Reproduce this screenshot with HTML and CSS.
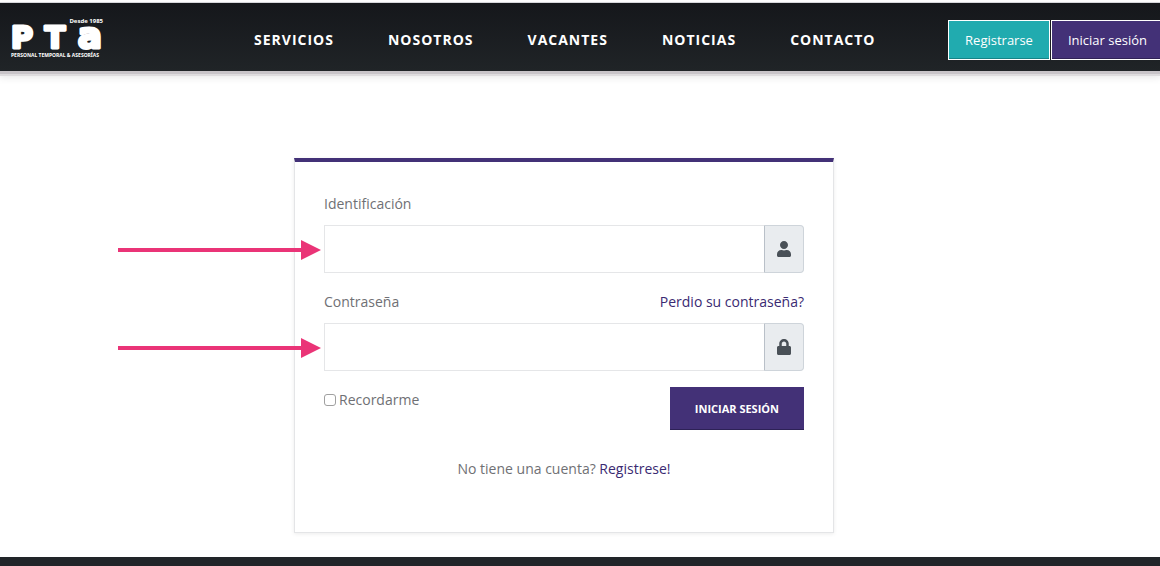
FILE: index.html
```html
<!DOCTYPE html>
<html lang="es">
<head>
<meta charset="utf-8">
<meta name="viewport" content="width=device-width, initial-scale=1">
<title>PTA - Iniciar sesión</title>
<link rel="stylesheet" href="styles.css">
</head>
<body>
<header class="site-header">
  <a class="logo" href="#" aria-label="PTA">
    <svg width="96" height="44" viewBox="0 0 96 44" fill="#fff">
      <text class="logo-since" x="94" y="5" text-anchor="end">Desde 1985</text>
      <g class="logo-letters">
        <text class="logo-cap" x="2" y="30">P</text>
        <text class="logo-cap" x="46" y="30" text-anchor="middle">T</text>
        <text class="logo-low" x="93" y="30" text-anchor="end">a</text>
      </g>
      <text class="logo-tag" x="2" y="39">PERSONAL TEMPORAL &amp; ASESORÍAS</text>
    </svg>
  </a>
  <nav class="main-nav">
    <a href="#">SERVICIOS</a>
    <a href="#">NOSOTROS</a>
    <a href="#">VACANTES</a>
    <a href="#">NOTICIAS</a>
    <a href="#">CONTACTO</a>
  </nav>
  <div class="actions">
    <a class="action action-register" href="#">Registrarse</a>
    <a class="action action-login" href="#">Iniciar sesión</a>
  </div>
</header>
<main class="content">
  <form class="card">
    <div class="label-row"><label for="ident">Identificación</label></div>
    <div class="input-group">
      <input class="field" id="ident" type="text">
      <span class="addon">
        <svg width="14" height="16" viewBox="0 0 448 512" fill="currentColor"><path d="M224 256c70.700 0 128-57.300 128-128S294.700 0 224 0 96 57.300 96 128s57.300 128 128 128zm89.600 32h-16.700c-22.200 10.200-46.900 16-72.900 16s-50.600-5.800-72.900-16h-16.700C60.200 288 0 348.200 0 422.400V464c0 26.500 21.500 48 48 48h352c26.500 0 48-21.500 48-48v-41.600c0-74.200-60.200-134.400-134.400-134.400z"/></svg>
      </span>
      <svg class="arrow" width="203" height="20" viewBox="0 0 203 20" fill="#ea3477"><path d="M0 8h183V0l20 10-20 10v-8H0z"/></svg>
    </div>
    <div class="label-row"><label for="pass">Contraseña</label><a href="#">Perdio su contraseña?</a></div>
    <div class="input-group">
      <input class="field" id="pass" type="password">
      <span class="addon">
        <svg width="14" height="16" viewBox="0 0 448 512" fill="currentColor"><path d="M400 224h-24v-72C376 68.200 307.800 0 224 0S72 68.200 72 152v72H48c-26.500 0-48 21.500-48 48v192c0 26.500 21.500 48 48 48h352c26.500 0 48-21.500 48-48V272c0-26.500-21.500-48-48-48zm-104 0H152v-72c0-39.700 32.300-72 72-72s72 32.300 72 72v72z"/></svg>
      </span>
      <svg class="arrow" width="203" height="20" viewBox="0 0 203 20" fill="#ea3477"><path d="M0 8h183V0l20 10-20 10v-8H0z"/></svg>
    </div>
    <div class="submit-row">
      <label class="remember"><input type="checkbox">Recordarme</label>
      <button class="submit" type="submit">INICIAR SESIÓN</button>
    </div>
    <p class="signup">No tiene una cuenta? <a href="#">Registrese!</a></p>
  </form>
</main>
<footer class="site-footer"></footer>
</body>
</html>
```
FILE: styles.css
```css
* { box-sizing: border-box; }
html, body { height: 100%; }
body {
  margin: 0;
  display: flex;
  flex-direction: column;
  overflow: hidden;
  background: #fff;
  color: #6f7074;
  font: 14px/28px "Open Sans", sans-serif;
}
a { color: #3a2a72; text-decoration: none; }

.site-header {
  flex: none;
  display: flex;
  align-items: center;
  margin-top: 2px;
  border-top: 1px solid #d6d6da;
  padding: 15px 0 9px 9px;
  background: linear-gradient(#15171b, #202427);
  box-shadow: 0 3px 0 #c8c4c8, 0 5px 0 #dedcde, 0 5px 8px 1px #e4e4e4;
}
.logo { display: flex; width: 245px; }
.logo svg { overflow: visible; }
.logo-letters { font-family: "DejaVu Sans", sans-serif; font-weight: 700; stroke: #fff; stroke-width: 3px; stroke-linejoin: round; }
.logo-cap { font-size: 30px; }
.logo-low { font-size: 36px; }
.logo-since { font: 700 6px "Open Sans", sans-serif; }
.logo-tag { font: 700 5px "Noto Sans", sans-serif; }

.main-nav { display: flex; gap: 54px; }
.main-nav a { color: #fff; font-weight: 700; letter-spacing: 1px; }

.actions { display: flex; gap: 1px; margin-left: auto; margin-right: -4px; }
.action {
  padding: 0 16px;
  border: 1px solid #fff;
  color: #fff;
  font-size: 13px;
  line-height: 38px;
  white-space: nowrap;
}
.action-register { background: #21abaf; box-shadow: inset 0 -1px 0 #168387; }
.action-login { background: #433177; box-shadow: inset 0 -1px 0 #302256; }

.content { flex: none; padding: 87px 32px 24px 0; }
.card {
  max-width: 540px;
  margin: 0 auto;
  padding: 28px 29px 49px;
  border: solid #e4e5e7;
  border-width: 0 1px 1px;
  border-top: 4px solid #433177;
  box-shadow: 0 1px 4px rgba(0, 0, 0, 0.08);
}
.label-row { display: flex; justify-content: space-between; margin-bottom: 7px; }
.input-group { position: relative; display: flex; height: 48px; margin-bottom: 15px; }
.field {
  flex: 1;
  min-width: 0;
  padding: 0 12px;
  border: 1px solid #e5e6e8;
  border-right: 0;
  background: #fff;
  font: inherit;
}
.addon {
  display: flex;
  align-items: center;
  justify-content: center;
  width: 40px;
  border: 1px solid #ced4da;
  border-left-color: #b9c0c8;
  border-radius: 0 4px 4px 0;
  background: #e9ecef;
  color: #495057;
}
.arrow { position: absolute; top: 15px; left: -206px; }

.submit-row { display: flex; align-items: flex-start; justify-content: space-between; padding-top: 1px; }
.remember { display: flex; align-items: center; gap: 3px; line-height: 26px; }
.remember input {
  appearance: none;
  width: 12px;
  height: 12px;
  margin: 0;
  border: 1px solid #a0a0a0;
  border-radius: 3px;
  background: #fff;
}
.submit {
  height: 43px;
  padding: 0 25px;
  border: 0;
  border-bottom: 1px solid #2d2156;
  background: #433177;
  color: #fff;
  font: 700 11px "Open Sans", sans-serif;
}
.signup { margin: 25px 0 0; text-align: center; }

.site-footer { flex: 1; background: #212529; }
```
